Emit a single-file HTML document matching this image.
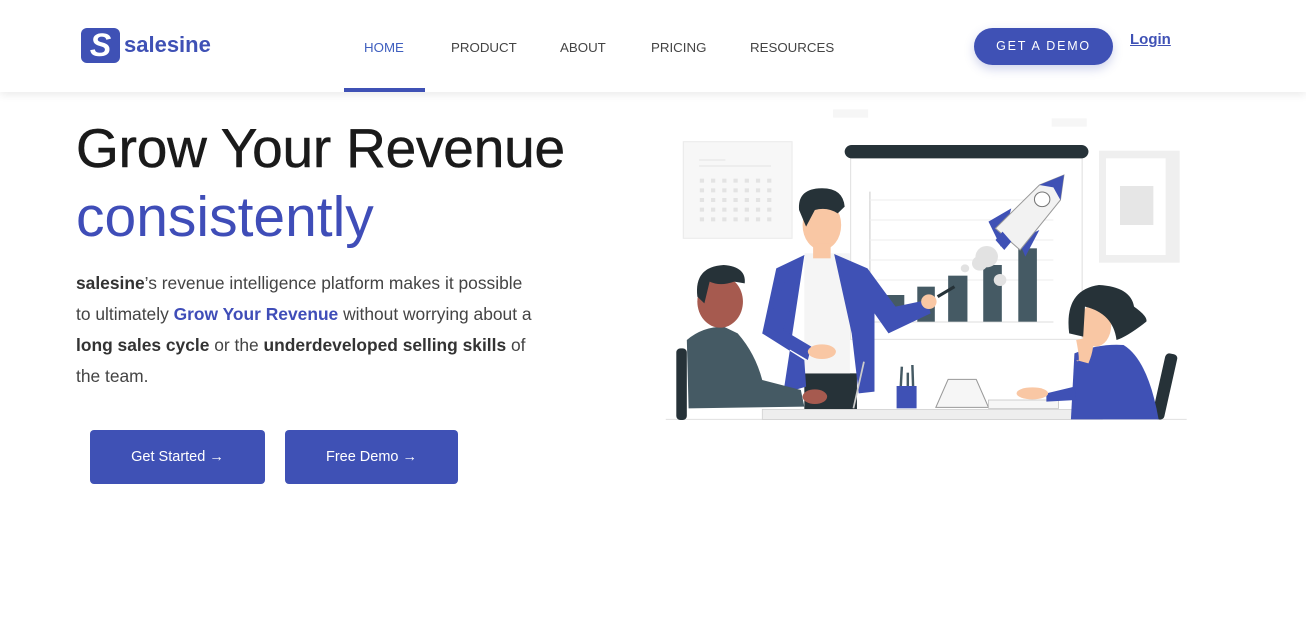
<!DOCTYPE html>
<html><head><meta charset="utf-8"><style>
*{margin:0;padding:0;box-sizing:border-box}
body{width:1306px;height:626px;background:#fff;font-family:"Liberation Sans",sans-serif;position:relative;overflow:hidden}
.nav{position:absolute;left:0;top:0;width:1306px;height:92px;background:#fff;box-shadow:0 3px 8px rgba(0,0,0,0.08)}
.logo{position:absolute;left:81px;top:28px;width:39px;height:35px;background:#3f51b5;border-radius:6px;color:#fff;font:bold 32px/35px "Liberation Sans",sans-serif;text-align:center;font-style:italic}
.brand{position:absolute;left:124px;top:32px;font:bold 22px "Liberation Sans",sans-serif;color:#3f51b5}
.ni{position:absolute;top:40px;font-size:13.3px;color:#444}
.ul{position:absolute;left:344px;top:88px;width:81px;height:4px;background:#3f51b5}
.demo{position:absolute;left:974px;top:28px;width:139px;height:37px;border-radius:19px;background:#3f51b5;color:#fff;font-size:12.5px;letter-spacing:1.8px;text-align:center;line-height:37px;box-shadow:0 4px 10px rgba(63,81,181,0.25)}
.login{position:absolute;left:1130px;top:31px;font-weight:bold;font-size:15px;color:#3f51b5;text-decoration:underline}
h1{position:absolute;left:76px;top:116px;font-weight:normal;font-size:55px;color:#1a1a1a;letter-spacing:-0.2px;white-space:nowrap;-webkit-text-stroke:0.5px #1a1a1a}
h2{position:absolute;left:76px;top:184px;font-weight:normal;font-size:57px;color:#3f4db8;white-space:nowrap}
p{position:absolute;left:76px;top:268px;font-size:17.4px;line-height:31px;color:#444;white-space:nowrap}
p b{color:#333}
p b.bl{color:#3f4db8}
.btn{position:absolute;top:430px;height:54px;background:#3f51b5;border-radius:4px;color:#fff;font-size:14.5px;text-align:center;line-height:54px}
</style></head><body>
<div class="nav">
<div class="logo">S</div><div class="brand">salesine</div>
<div class="ni" style="left:364px;color:#3f5fbf">HOME</div>
<div class="ni" style="left:451px">PRODUCT</div>
<div class="ni" style="left:560px">ABOUT</div>
<div class="ni" style="left:651px">PRICING</div>
<div class="ni" style="left:750px">RESOURCES</div>
<div class="ul"></div>
<div class="demo">GET A DEMO</div>
<div class="login">Login</div>
</div>
<h1>Grow Your Revenue</h1>
<h2>consistently</h2>
<p><b>salesine</b>’s revenue intelligence platform makes it possible<br>to ultimately <b class="bl">Grow Your Revenue</b> without worrying about a<br><b>long sales cycle</b> or the <b>underdeveloped selling skills</b> of<br>the team.</p>
<div class="btn" style="left:90px;width:175px">Get Started →</div>
<div class="btn" style="left:285px;width:173px">Free Demo →</div>

<svg style="position:absolute;left:650px;top:100px" width="550" height="330" viewBox="0 0 1568 990" preserveAspectRatio="none">
<rect x="95" y="125" width="310" height="290" fill="#f7f7f7" stroke="#eaeaea" stroke-width="3"/>
<line x1="140" y1="180" x2="215" y2="180" stroke="#e3e3e3" stroke-width="3"/>
<line x1="140" y1="198" x2="345" y2="198" stroke="#e3e3e3" stroke-width="3"/>
<g fill="#e3e3e3">
<rect x="142" y="236" width="12" height="12"/><rect x="174" y="236" width="12" height="12"/><rect x="206" y="236" width="12" height="12"/><rect x="238" y="236" width="12" height="12"/><rect x="270" y="236" width="12" height="12"/><rect x="302" y="236" width="12" height="12"/><rect x="334" y="236" width="12" height="12"/>
<rect x="142" y="265" width="12" height="12"/><rect x="174" y="265" width="12" height="12"/><rect x="206" y="265" width="12" height="12"/><rect x="238" y="265" width="12" height="12"/><rect x="270" y="265" width="12" height="12"/><rect x="302" y="265" width="12" height="12"/><rect x="334" y="265" width="12" height="12"/>
<rect x="142" y="294" width="12" height="12"/><rect x="174" y="294" width="12" height="12"/><rect x="206" y="294" width="12" height="12"/><rect x="238" y="294" width="12" height="12"/><rect x="270" y="294" width="12" height="12"/><rect x="302" y="294" width="12" height="12"/><rect x="334" y="294" width="12" height="12"/>
<rect x="142" y="323" width="12" height="12"/><rect x="174" y="323" width="12" height="12"/><rect x="206" y="323" width="12" height="12"/><rect x="238" y="323" width="12" height="12"/><rect x="270" y="323" width="12" height="12"/><rect x="302" y="323" width="12" height="12"/><rect x="334" y="323" width="12" height="12"/>
<rect x="142" y="352" width="12" height="12"/><rect x="174" y="352" width="12" height="12"/><rect x="206" y="352" width="12" height="12"/><rect x="238" y="352" width="12" height="12"/><rect x="270" y="352" width="12" height="12"/><rect x="302" y="352" width="12" height="12"/><rect x="334" y="352" width="12" height="12"/>
</g>
<rect x="1280" y="152" width="230" height="336" fill="#efefef"/>
<rect x="1300" y="175" width="170" height="290" fill="#fff"/>
<rect x="1340" y="258" width="95" height="117" fill="#e6e6e6"/>
<rect x="522" y="28" width="100" height="25" fill="#f6f6f6"/>
<rect x="1145" y="55" width="100" height="25" fill="#f6f6f6"/>
<rect x="572" y="170" width="660" height="548" fill="#fff" stroke="#e0e0e0" stroke-width="3"/>
<rect x="555" y="135" width="695" height="40" rx="20" fill="#263238"/>
<line x1="627" y1="275" x2="627" y2="665" stroke="#ccc" stroke-width="3"/>
<g stroke="#eee" stroke-width="3"><line x1="627" y1="300" x2="1150" y2="300"/><line x1="627" y1="360" x2="1150" y2="360"/><line x1="627" y1="420" x2="1150" y2="420"/><line x1="627" y1="480" x2="1150" y2="480"/><line x1="627" y1="540" x2="1150" y2="540"/></g>
<line x1="627" y1="666" x2="1150" y2="666" stroke="#ddd" stroke-width="3"/>
<g fill="#455a64"><rect x="675" y="585" width="50" height="80"/><rect x="762" y="560" width="50" height="105"/><rect x="850" y="527" width="55" height="138"/><rect x="950" y="495" width="53" height="170"/><rect x="1050" y="445" width="53" height="220"/></g>
<g fill="#e2e2e2"><circle cx="960" cy="470" r="32"/><circle cx="940" cy="490" r="22"/><circle cx="998" cy="540" r="18"/><circle cx="898" cy="505" r="12"/></g>
<polygon points="1000,440 965,365 1030,325" fill="#3f51b5"/>
<polygon points="1070,470 1110,390 1050,420" fill="#3f51b5"/>
<polygon points="985,385 1055,450 1170,300 1180,225 1110,255" fill="#f2f2f2" stroke="#999" stroke-width="3"/>
<polygon points="1110,255 1180,225 1170,300 1150,262" fill="#3f51b5"/>
<circle cx="1118" cy="298" r="22" fill="#fff" stroke="#777" stroke-width="3"/>
<polygon points="985,420 1005,395 1030,425 1010,450" fill="#3f51b5"/>
<line x1="45" y1="958" x2="1530" y2="958" stroke="#e0e0e0" stroke-width="3"/>
<rect x="75" y="745" width="30" height="215" rx="12" fill="#263238"/>
<rect x="1450" y="760" width="35" height="200" rx="12" fill="#263238" transform="rotate(12 1470 860)"/>
<polygon points="440,820 590,820 590,928 440,928" fill="#263238"/>
<rect x="440" y="460" width="130" height="360" fill="#f5f5f5"/>
<polygon points="440,465 360,505 320,700 440,780 445,860 380,880" fill="#3f51b5"/>
<polygon points="525,462 620,505 700,620 790,600 800,640 680,700 640,640 640,875 595,880 575,700" fill="#3f51b5"/>
<polygon points="440,465 400,510 320,700 450,780 460,740 380,690 420,560" fill="#3f51b5"/>
<ellipse cx="490" cy="375" rx="55" ry="75" fill="#f9c7a4"/>
<rect x="465" y="430" width="50" height="45" fill="#f9c7a4"/>
<path d="M425,330 Q420,270 480,265 Q550,260 555,320 L535,340 Q505,320 470,330 L445,380 Z" fill="#263238"/>
<circle cx="795" cy="605" r="22" fill="#f9c7a4"/>
<line x1="820" y1="590" x2="868" y2="560" stroke="#263238" stroke-width="9"/>
<ellipse cx="490" cy="755" rx="40" ry="22" fill="#f9c7a4"/>
<line x1="580" y1="925" x2="610" y2="785" stroke="#ccc" stroke-width="5"/>
<path d="M105,720 Q150,680 210,680 L250,700 Q300,760 320,840 L430,870 L440,920 L110,925 Z" fill="#455a64"/>
<ellipse cx="200" cy="605" rx="65" ry="78" fill="#a65a4f"/>
<path d="M135,590 Q125,500 210,495 Q275,500 270,550 L240,545 Q200,560 170,545 L155,610 Z" fill="#263238"/>
<ellipse cx="470" cy="890" rx="35" ry="22" fill="#a65a4f"/>
<rect x="320" y="928" width="970" height="30" fill="#eeeeee" stroke="#ccc" stroke-width="2"/>
<rect x="703" y="858" width="57" height="67" fill="#3f51b5"/>
<g stroke="#455a64" stroke-width="7"><line x1="715" y1="858" x2="718" y2="800"/><line x1="735" y1="858" x2="735" y2="818"/><line x1="750" y1="858" x2="748" y2="795"/></g>
<polygon points="815,922 850,838 930,838 965,922" fill="#f6f6f6" stroke="#999" stroke-width="3"/>
<rect x="965" y="900" width="200" height="25" fill="#f6f6f6" stroke="#bbb" stroke-width="2"/>
<path d="M1210,760 Q1280,730 1350,735 Q1420,780 1450,958 L1200,958 Z" fill="#3f51b5"/>
<path d="M1130,880 L1210,860 L1215,900 L1130,905 Z" fill="#3f51b5"/>
<ellipse cx="1090" cy="880" rx="45" ry="18" fill="#f9c7a4"/>
<ellipse cx="1270" cy="675" rx="45" ry="65" fill="#f9c7a4"/>
<path d="M1195,700 Q1180,570 1280,555 Q1370,560 1380,620 Q1420,650 1415,665 Q1360,710 1330,720 Q1320,640 1240,620 L1235,710 Z" fill="#263238"/>
<path d="M1215,720 Q1230,800 1215,780 L1250,790 Q1270,740 1260,710 Z" fill="#f9c7a4"/>
</svg>
</body></html>
